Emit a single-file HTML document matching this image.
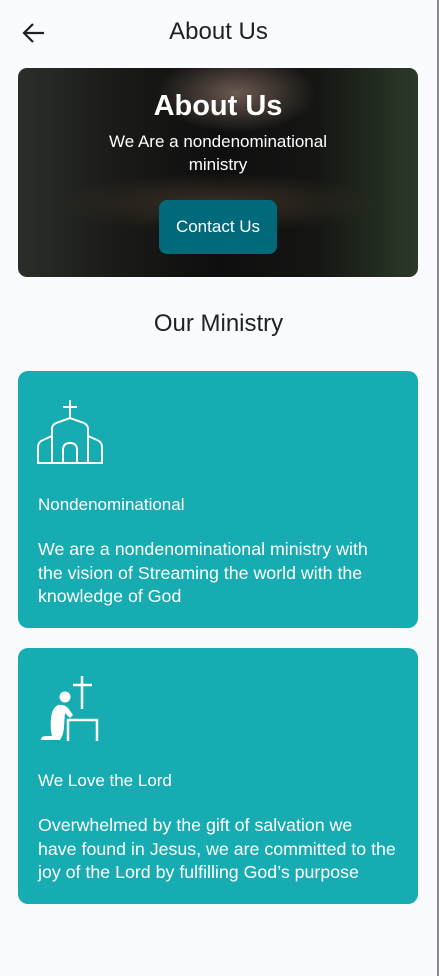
<!DOCTYPE html>
<html><head><meta charset="utf-8"><style>
*{margin:0;padding:0;box-sizing:border-box}
body{width:439px;height:976px;background:#f9fbfe;font-family:"Liberation Sans",sans-serif;position:relative;overflow:hidden;border-right:2px solid #8a8a8a}
.title{position:absolute;top:18px;left:0;width:437px;text-align:center;font-size:24px;color:#222}
.hero{position:absolute;left:18px;top:68px;width:400px;height:209px;border-radius:9px;overflow:hidden;
background:radial-gradient(ellipse 80px 40px at 218px 25px,#6b5a50 0%,transparent 100%),
radial-gradient(ellipse 160px 30px at 200px 135px,#3a3025 0%,transparent 100%),
linear-gradient(90deg,#2a2e28 0%,#1a1a18 25%,#0e0e0e 50%,#151614 75%,#2c3a28 100%)}
.hero h1{position:absolute;top:22px;width:100%;text-align:center;color:#fff;font-size:29px;font-weight:bold}
.hero p{position:absolute;top:62px;width:100%;text-align:center;color:#fff;font-size:17px;line-height:23px}
.btn{position:absolute;left:141px;top:132px;width:118px;height:54px;border-radius:8px;background:#006a7a;color:#fff;font-size:17px;text-align:center;line-height:54px}
.h2{position:absolute;top:310px;width:437px;text-align:center;font-size:24px;color:#222}
.card{position:absolute;left:18px;width:400px;border-radius:10px;background:#17abb2;color:#fff}
.card .t{position:absolute;left:20px;font-size:17px}
.card .d{position:absolute;left:20px;font-size:17.8px;line-height:23.5px;white-space:nowrap}
svg{position:absolute}
</style></head><body>
<svg style="left:22px;top:22px" width="24" height="22" viewBox="0 0 24 22"><path d="M22 11H3M11 2L2 11l9 9" fill="none" stroke="#222" stroke-width="2.2"/></svg>
<div class="title">About Us</div>
<div class="hero"><h1>About Us</h1><p>We Are a nondenominational<br>ministry</p><div class="btn">Contact Us</div></div>
<div class="h2">Our Ministry</div>
<div class="card" style="top:371px;height:257px">
<svg style="left:0;top:0" width="100" height="100" viewBox="0 0 100 100"><g fill="none" stroke="#fff" stroke-width="2">
<path d="M52 29V47M45 36H59"/>
<path d="M34 92V58Q34 54 38 52L52 47L66 52Q70 54 70 58V92"/>
<path d="M20 92V76Q20 71 25 69L34 65M70 65L79 69Q84 71 84 76V92"/>
<path d="M19 92H85"/>
<path d="M45 92V79Q45 72 52 72Q59 72 59 79V92"/></g></svg>
<div class="t" style="top:124px">Nondenominational</div>
<div class="d" style="top:167px">We are a nondenominational ministry with<br>the vision of Streaming the world with the<br>knowledge of God</div>
</div>
<div class="card" style="top:648px;height:256px">
<svg style="left:0;top:0" width="100" height="100" viewBox="0 0 100 100"><g fill="#fff">
<circle cx="47" cy="49" r="5.5"/>
<path d="M40 57Q46 56 50 60L55 67L52 70L47 65L46 78Q46 86 42 92H23Q23 88 28 88H34Q32 80 33 70Q34 60 40 57Z"/>
</g><g fill="none" stroke="#fff" stroke-width="2.5"><path d="M64 28V61M55 37H74"/><path d="M50 93V72H79V93"/></g></svg>
<div class="t" style="top:123px">We Love the Lord</div>
<div class="d" style="top:166px">Overwhelmed by the gift of salvation we<br>have found in Jesus, we are committed to the<br>joy of the Lord by fulfilling God’s purpose</div>
</div>
</body></html>
